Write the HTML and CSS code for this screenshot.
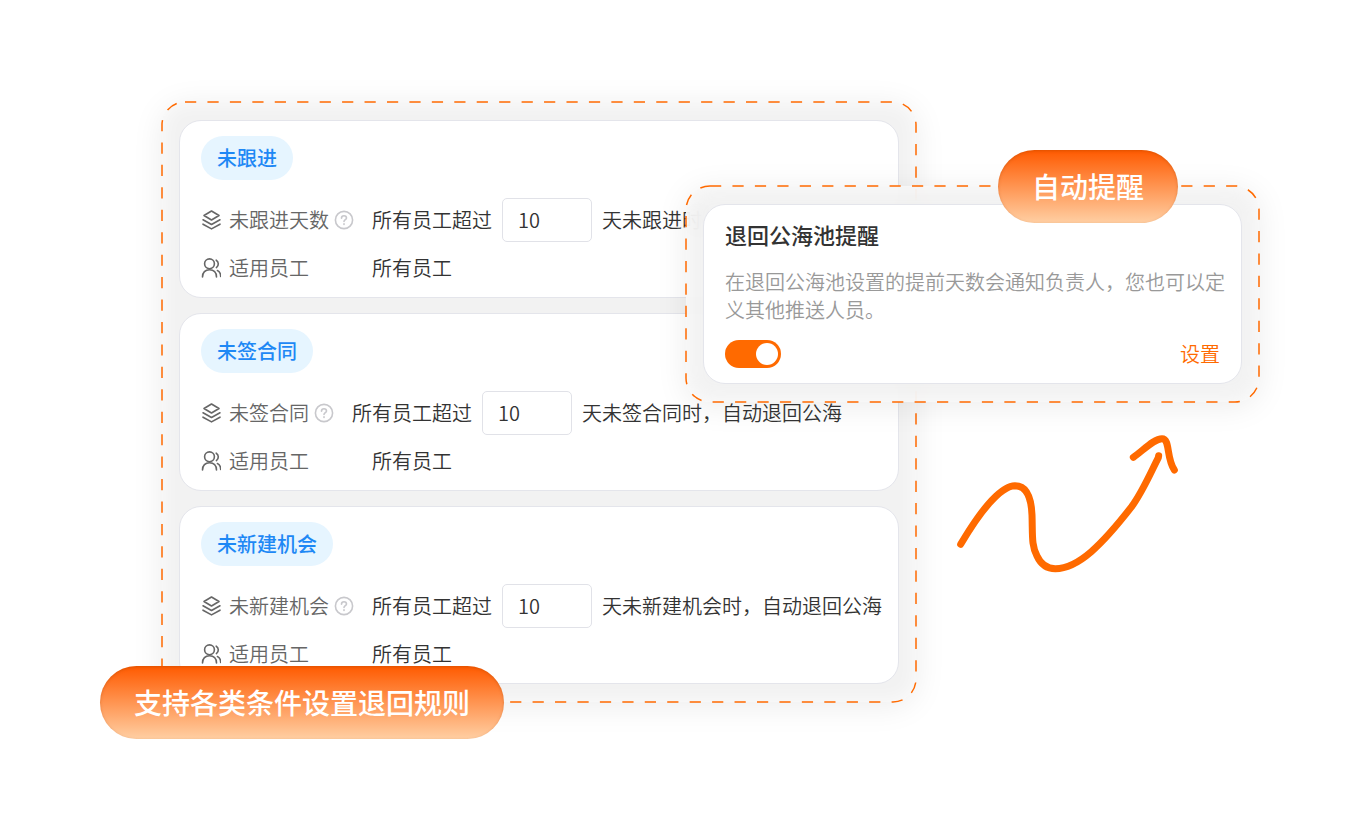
FILE: index.html
```html
<!DOCTYPE html>
<html lang="zh-CN">
<head>
    <meta charset="UTF-8">
    <meta name="viewport" content="width=device-width, initial-scale=1.0">
    <title>退回公海池规则</title>
    <link rel="stylesheet" href="styles.css">
</head>
<body>
    <!-- shared icons -->
    <svg class="sprite" aria-hidden="true">
        <symbol id="icon-layers" viewBox="0 0 20 20">
            <path d="M10.500 1 18 5.500 10.500 10 3 5.500Z"/>
            <path d="M2 9.800l8.500 4.700L19 9.800"/>
            <path d="M2 14.200l8.500 4.700L19 14.200"/>
        </symbol>
        <symbol id="icon-users" viewBox="0 0 20 20">
            <circle cx="8.500" cy="5.800" r="4.900"/>
            <path d="M1.500 19c0-4.500 2.800-7.300 7-7.300s7 2.800 7 7.300"/>
            <path d="M15.200 2.200c2.600 1.400 2.900 5.400.2 7.400"/>
            <path d="M16.400 12.500c2.200 1 3.300 3.200 3.300 6"/>
        </symbol>
        <symbol id="icon-help" viewBox="0 0 20 20">
            <circle cx="10" cy="10" r="8.600"/>
            <path d="M7.500 8.200c0-1.500 1.100-2.500 2.500-2.500s2.500 1 2.500 2.300c0 1.600-2.500 1.800-2.500 3.500"/>
            <path d="M10 13.800v.6"/>
        </symbol>
    </svg>

    <main class="scene">
        <section class="panel rules">
            <svg class="outline" aria-hidden="true"><rect width="100%" height="100%" rx="23"/></svg>

            <article class="card">
                <h2 class="tag">未跟进</h2>
                <div class="row">
                    <svg class="icon"><use href="#icon-layers"/></svg>
                    <label class="name" for="days-follow">未跟进天数</label>
                    <svg class="help"><use href="#icon-help"/></svg>
                    <span>所有员工超过</span>
                    <input class="days" id="days-follow" type="text" value="10">
                    <span>天未跟进时</span>
                </div>
                <div class="row">
                    <svg class="icon"><use href="#icon-users"/></svg>
                    <span class="name staff">适用员工</span>
                    <span>所有员工</span>
                </div>
            </article>

            <article class="card">
                <h2 class="tag">未签合同</h2>
                <div class="row">
                    <svg class="icon"><use href="#icon-layers"/></svg>
                    <label class="name" for="days-contract">未签合同</label>
                    <svg class="help"><use href="#icon-help"/></svg>
                    <span>所有员工超过</span>
                    <input class="days" id="days-contract" type="text" value="10">
                    <span>天未签合同时，自动退回公海</span>
                </div>
                <div class="row">
                    <svg class="icon"><use href="#icon-users"/></svg>
                    <span class="name staff">适用员工</span>
                    <span>所有员工</span>
                </div>
            </article>

            <article class="card">
                <h2 class="tag">未新建机会</h2>
                <div class="row">
                    <svg class="icon"><use href="#icon-layers"/></svg>
                    <label class="name" for="days-chance">未新建机会</label>
                    <svg class="help"><use href="#icon-help"/></svg>
                    <span>所有员工超过</span>
                    <input class="days" id="days-chance" type="text" value="10">
                    <span>天未新建机会时，自动退回公海</span>
                </div>
                <div class="row">
                    <svg class="icon"><use href="#icon-users"/></svg>
                    <span class="name staff">适用员工</span>
                    <span>所有员工</span>
                </div>
            </article>
        </section>
        <div class="badge badge-rules">支持各类条件设置退回规则</div>

        <section class="panel reminder">
            <svg class="outline" aria-hidden="true"><rect width="100%" height="100%" rx="24"/></svg>
            <div class="card">
                <h2 class="title"><label for="remind">退回公海池提醒</label></h2>
                <p class="desc">在退回公海池设置的提前天数会通知负责人，您也可以定义其他推送人员。</p>
                <div class="actions">
                    <input class="toggle" id="remind" type="checkbox" checked>
                    <a class="link" href="#">设置</a>
                </div>
            </div>
            <div class="badge badge-remind">自动提醒</div>
        </section>

        <svg class="arrow" viewBox="0 0 780 510" aria-hidden="true">
            <path d="M62 373C118 278 180 198 225 197C262 197 274 236 276 285C278 345 274 377 291 408C302 432 322 446 346 446C415 446 487 373 575 260C608 215 634 154 655 113L656 107"/>
            <path d="M580 112C610 91 642 56 666 56C691 56 678 113 703 150"/>
        </svg>
    </main>
</body>
</html>
```
FILE: styles.css
```css
* {
    box-sizing: border-box;
}
body {
    min-height: 100vh;
    margin: 0;
    padding: 102px 0;
    background: #fff;
    color: #333;
    font-family: "Noto Sans CJK SC", sans-serif;
    font-size: 20px;
    font-weight: 350;
    line-height: 28px;
}
h2, p {
    margin: 0;
}
.sprite {
    display: none;
}
.scene {
    position: relative;
    max-width: 1160px;
    margin: 0 auto;
}

/* dashed panels */
.panel {
    padding: 18px 17px;
    border-radius: 24px;
    background: rgba(240, 240, 240, 0.85);
    box-shadow: 0 4px 32px rgba(0, 0, 0, 0.08), inset 0 0 20px rgba(255, 255, 255, 0.8);
}
.outline {
    position: absolute;
    inset: 0;
    width: 100%;
    height: 100%;
    overflow: visible;
    pointer-events: none;
}
.outline rect {
    fill: none;
    stroke: #ff6a00;
    stroke-width: 1.5;
    stroke-dasharray: 11.22;
}
.rules {
    position: relative;
    display: flex;
    flex-direction: column;
    gap: 15px;
    width: 65%;
    margin-left: 62px;
}
.reminder {
    position: absolute;
    top: 84px;
    left: 586px;
    right: 1px;
    backdrop-filter: blur(12px);
}
.card {
    padding: 15px 21px;
    border: 1px solid #e4e5eb;
    border-radius: 22px;
    background: #fff;
}

/* rule cards */
.tag {
    width: fit-content;
    margin-bottom: 18px;
    padding: 8px 16px;
    border-radius: 22px;
    background: #e6f5ff;
    color: #1e88f5;
    font-size: 20px;
    font-weight: 500;
}
.row {
    display: flex;
    align-items: center;
    white-space: nowrap;
}
.row + .row {
    margin-top: 12px;
}
.icon, .help {
    flex: none;
    width: 20px;
    height: 20px;
    fill: none;
    stroke: #666;
    stroke-width: 1.6;
    stroke-linecap: round;
    stroke-linejoin: round;
}
.name {
    margin-left: 8px;
    color: #666;
}
.help {
    margin: 0 18px 0 5px;
    stroke: #c8c8cc;
}
.staff {
    width: 143px;
}
.days {
    width: 90px;
    height: 44px;
    margin: 0 10px;
    padding: 0 15px 2px;
    border: 1px solid #e1e2e8;
    border-radius: 5px;
    background: #fff;
    color: #333;
    font: inherit;
}

/* reminder card */
.title {
    font-size: 22px;
    font-weight: 500;
    line-height: 28px;
}
.desc {
    margin: 20px -6px 16px 0;
    color: #999;
}
.actions {
    display: flex;
    align-items: center;
    justify-content: space-between;
}
.toggle {
    appearance: none;
    display: flex;
    justify-content: flex-end;
    width: 56px;
    height: 28px;
    margin: 0;
    padding: 3px;
    border-radius: 14px;
    background: #ccc;
}
.toggle:checked {
    background: #ff6a00;
}
.toggle::before {
    content: "";
    width: 22px;
    height: 22px;
    border-radius: 50%;
    background: #fff;
}
.link {
    color: #ff6a00;
    text-decoration: none;
}

.badge {
    position: absolute;
    padding: 16px 34px;
    border-radius: 37px;
    background: linear-gradient(#ff5a00, #ffcfa3);
    box-shadow: inset 0 1px 3px rgba(160, 70, 0, 0.35);
    color: #fff;
    font-size: 28px;
    font-weight: 500;
    line-height: 41px;
    white-space: nowrap;
}
.badge-rules {
    top: 564px;
    left: 0;
}
.badge-remind {
    top: -36px;
    right: 81px;
}

.arrow {
    position: absolute;
    top: 318px;
    left: 840px;
    width: 260px;
    fill: none;
    stroke: #ff6a00;
    stroke-width: 21;
    stroke-linecap: round;
    stroke-linejoin: round;
}
```
